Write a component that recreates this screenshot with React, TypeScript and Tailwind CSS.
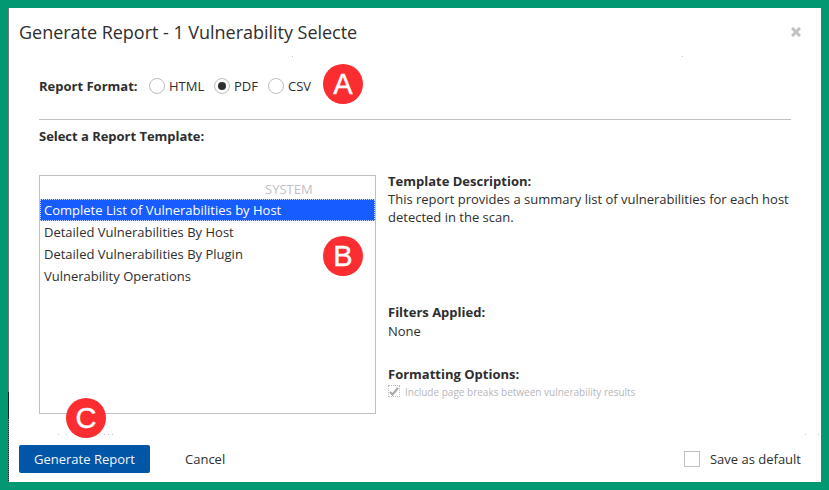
import { ReactNode } from "react";

function Marker({ letter, className }: { letter: string; className: string }) {
  return (
    <div
      className={`absolute flex h-10 w-10 items-center justify-center rounded-full bg-[#fb2d31] font-['Liberation_Sans',sans-serif] text-[29px] leading-none text-white [-webkit-text-stroke:0.4px_white] ${className}`}
    >
      {letter}
    </div>
  );
}

function Radio({ label, checked, className }: { label: ReactNode; checked?: boolean; className: string }) {
  return (
    <label className={`flex items-center gap-1 ${className}`}>
      <span className="flex h-4 w-4 items-center justify-center rounded-full border border-[#bdbdc0]">
        {checked && <span className="h-2 w-2 rounded-full bg-[#2e2e2e]" />}
      </span>
      <span>{label}</span>
    </label>
  );
}

const templates = [
  "Complete List of Vulnerabilities by Host",
  "Detailed Vulnerabilities By Host",
  "Detailed Vulnerabilities By Plugin",
  "Vulnerability Operations",
];

export default function App() {
  return (
    <div className="relative h-[490px] w-[829px] overflow-hidden border-8 border-[#029972] bg-white font-['Open_Sans','Noto_Sans',sans-serif] text-[13px] leading-[18px] text-[#2e2e2e]">
      <div className="flex h-full flex-col border-l border-[#777]">
        <header className="flex h-12 items-center justify-between pr-5 pl-2.5">
          <h1 className="text-[18px] leading-6 tracking-[-0.025px] whitespace-nowrap">
            Generate Report - 1 Vulnerability Selecte
          </h1>
          <svg width="10" height="10" viewBox="0 0 10 10" stroke="#c2c2c6" strokeWidth="3" aria-label="Close">
            <path d="M1 1L9 9M9 1L1 9" />
          </svg>
        </header>

        <main className="flex h-[379px] flex-col px-[30px]">
          <div className="flex h-[64px] items-center border-b border-[#c1c1c1] pb-[4px]">
            <div className="w-[110px] font-bold">Report Format:</div>
            <Radio label="HTML" className="w-[65px]" />
            <Radio label="PDF" checked className="w-[54px]" />
            <Radio label="CSV" className="" />
          </div>
          <h2 className="mt-[7px] font-bold tracking-[-0.03px]">Select a Report Template:</h2>

          <div className="mt-[30px] flex gap-3">
            <div className="h-[239px] w-[337px] shrink-0 border border-[#c0c0c0]">
              <div className="flex h-[23px] items-center pt-[3px] pl-[225px] text-[#bfbfc3]">SYSTEM</div>
              {templates.map((t, i) => (
                <div
                  key={t}
                  className={
                    i === 0
                      ? "flex h-[22px] items-center border border-dotted border-[#c9d8ff] bg-[#175cff] pl-[3px] text-white"
                      : "flex h-[22px] items-center pl-1"
                  }
                >
                  {t}
                </div>
              ))}
            </div>
            <div className="flex flex-1 flex-col">
              <h3 className="-mt-[3px] font-bold">Template Description:</h3>
              <p className="h-[113px] whitespace-nowrap">
                This report provides a summary list of vulnerabilities for each host
                <br />
                detected in the scan.
              </p>
              <h3 className="font-bold">Filters Applied:</h3>
              <p className="mt-px">None</p>
              <h3 className="mt-[25px] font-bold">Formatting Options:</h3>
              <div className="flex items-center gap-[5px] text-[10px] text-[#b6b6ba]">
                <span className="-mt-0.5 flex h-3 w-3 items-center justify-center border border-dotted border-[#bcbcc0]">
                  <svg width="10" height="9" viewBox="0 0 10 9" fill="none" stroke="#a9a9ac" strokeWidth="2.2">
                    <path d="M1 5L3.5 7.5L9 1" />
                  </svg>
                </span>
                Include page breaks between vulnerability results
              </div>
            </div>
          </div>
        </main>

        <footer className="flex flex-1 items-center pt-px pr-5 pl-2.5">
          <button className="h-7 w-[131px] rounded-[2px] bg-[#0256a7] text-[#f1f5fa]">Generate Report</button>
          <button className="ml-[35px]">Cancel</button>
          <label className="ml-auto flex items-center gap-2.5">
            <span className="h-4 w-4 border border-[#c0c0c0]" />
            Save as default
          </label>
        </footer>
      </div>
      {/* Speckles along the section edges and the darker foot of the left edge */}
      <svg className="absolute top-0 left-0" width="813" height="474" fill="#c0c0c0" shapeRendering="crispEdges">
        <path d="M284 48h1v1h-1zM674 48h1v1h-1zM50 426h1v1h-1zM58 426h1v1h-1zM96 426h1v1h-1zM100 426h1v1h-1zM104 426h1v1h-1zM797 426h1v1h-1zM810 426h1v1h-1z" />
        <path d="M0 384h1v26h-1z" fill="#222" />
        <path d="M0.5 410V474" stroke="#222" strokeDasharray="1 1" />
      </svg>
      <Marker letter="A" className="top-[56px] left-[315px]" />
      <Marker letter="B" className="top-[228px] left-[315px]" />
      <Marker letter="C" className="top-[390px] left-[58px]" />
    </div>
  );
}
